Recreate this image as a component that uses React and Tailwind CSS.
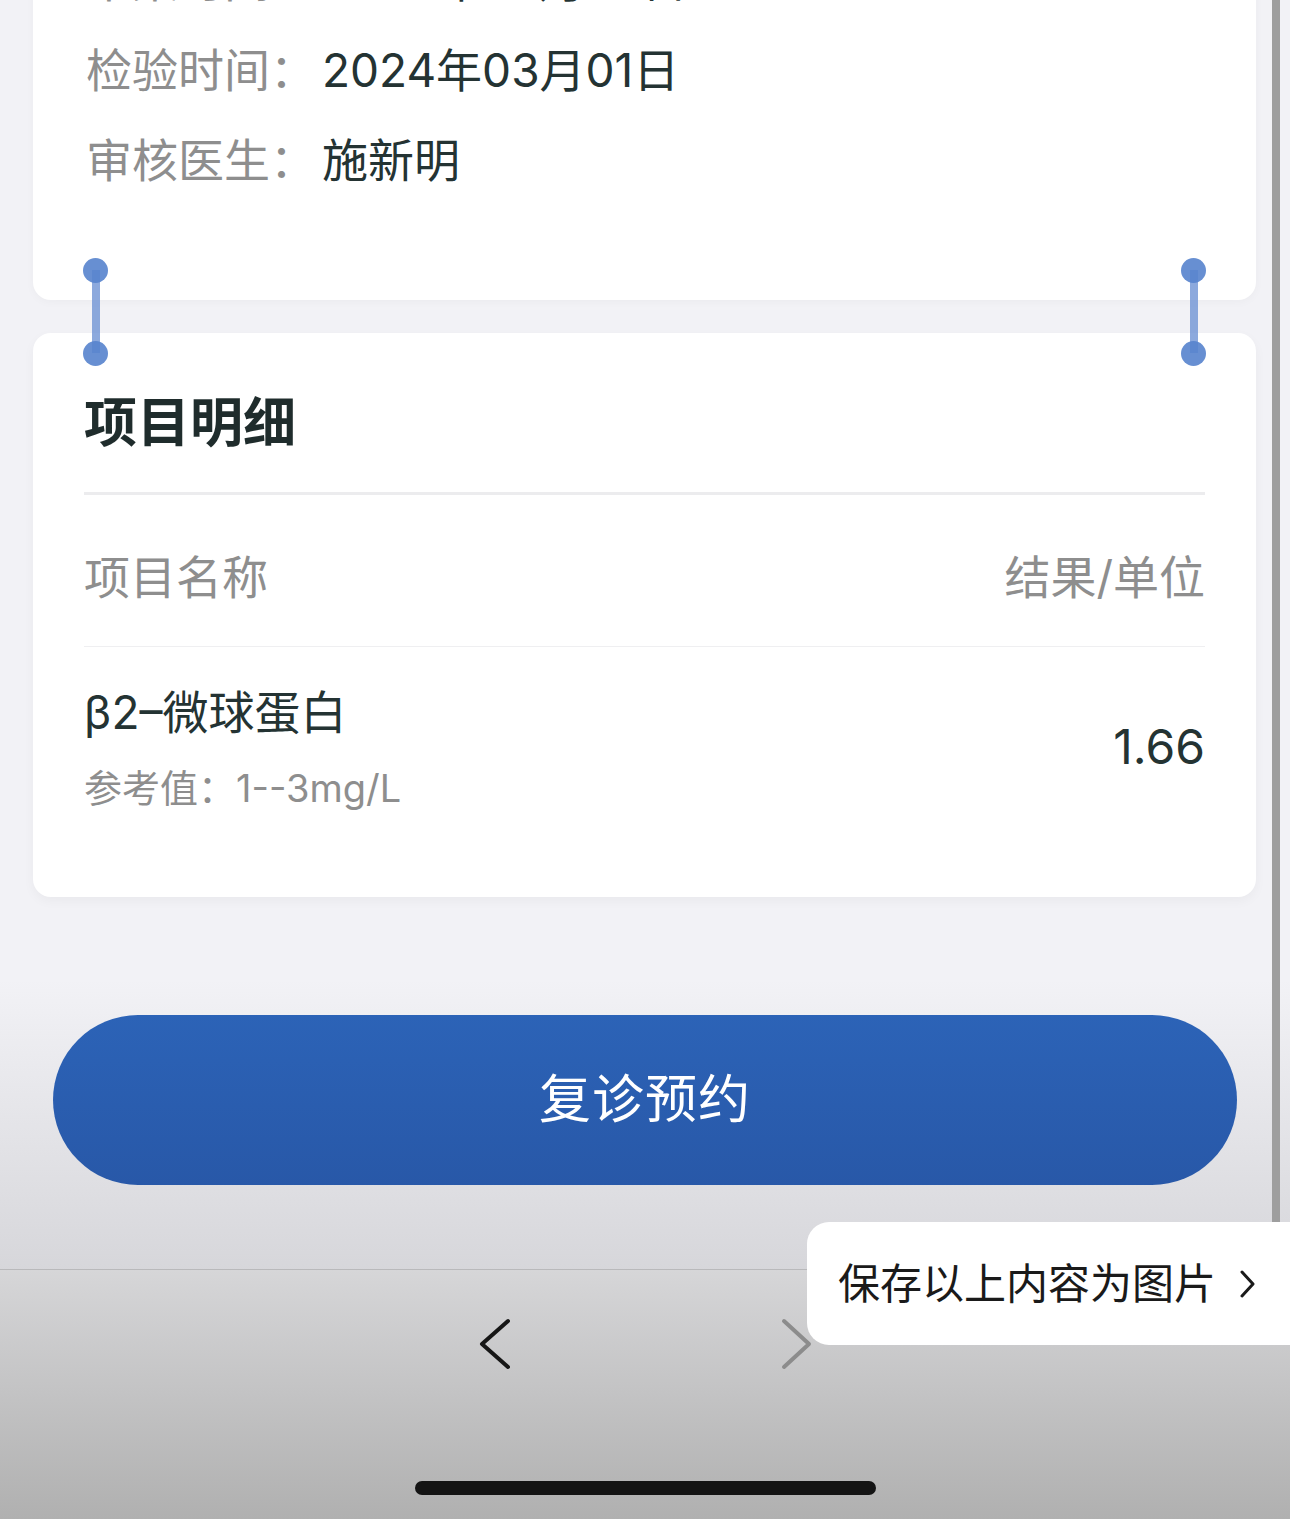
import React from "react";

const Row = ({ label, value }) => (
  <div className="flex h-[90px] items-center text-[46px] leading-none">
    <span className="text-[#8e8e8e]">{label}：</span>
    <span className="ml-[6px] text-[#243333]">{value}</span>
  </div>
);

const Handle = ({ x }) => (
  <div className="absolute top-[258px] z-20 h-[108px] w-[26px]" style={{ left: x - 13 }}>
    <div className="absolute left-[9px] top-[12px] h-[83px] w-[8px] bg-[#6f93d4]/80" />
    <div className="absolute left-0 top-0 h-[25px] w-[25px] rounded-full bg-[#5683cd]/90" />
    <div className="absolute left-0 top-[83px] h-[25px] w-[25px] rounded-full bg-[#5683cd]/90" />
  </div>
);

const App = () => {
  return (
    <div className="relative h-[1519px] w-[1290px] overflow-hidden bg-[#f2f2f6] font-['Inter','Noto_Sans_CJK_SC',sans-serif]">
      {/* 浏览器底栏渐变（按钮之下） */}
      <div className="pointer-events-none absolute left-0 top-[980px] h-[289px] w-full bg-gradient-to-b from-[#f2f2f6]/0 to-[#c4c4c8]/60" />

      <div className="relative z-10 pl-[33px] pr-[34px]">
        {/* 检验信息 */}
        <div className="-mt-[65px] rounded-[18px] bg-white pb-[95px] pl-[53px] shadow-[0_2px_10px_rgba(0,0,0,0.03)]">
          <Row label="采集时间" value="2024年02月29日 08:35:17" />
          <Row label="检验时间" value="2024年03月01日" />
          <Row label="审核医生" value="施新明" />
        </div>

        {/* 项目明细 */}
        <div className="mt-[33px] h-[564px] rounded-[18px] bg-white px-[51px] shadow-[0_4px_12px_rgba(0,0,0,0.04)]">
          <div className="pt-[60px] text-[53px] font-bold leading-[60px] text-[#1f2c2c]">
            项目明细
          </div>
          <div className="mt-[39px] h-[3px] bg-[#ececee]" />
          <div className="flex h-[152px] items-center justify-between border-b border-[#efeff1] pt-[12px] text-[46px] leading-none text-[#8e8e8e]">
            <span>项目名称</span>
            <span>结果/单位</span>
          </div>
          <div className="flex items-center justify-between pt-[40px]">
            <div className="flex flex-col">
              <span className="text-[46px] leading-[50px] text-[#243333]">β2–微球蛋白</span>
              <span className="mt-[26px] text-[38px] leading-[50px] text-[#8e8e8e]">参考值：1--3mg/L</span>
            </div>
            <span className="-mt-[6px] text-[48px] leading-none text-[#243333]">1.66</span>
          </div>
        </div>
      </div>

      <button className="relative z-10 mx-[53px] mt-[118px] flex h-[170px] w-[1184px] items-center justify-center rounded-full bg-gradient-to-b from-[#2c63b7] to-[#2858a8] text-[52px] leading-none tracking-[1px] text-white">
        复诊预约
      </button>

      {/* 选择手柄 */}
      <Handle x={96} />
      <Handle x={1194} />

      {/* 滚动条 */}
      <div className="absolute right-[10px] top-0 z-20 h-[1222px] w-[8px] bg-[#9e9e9e]" />

      {/* 浏览器底栏 */}
      <div className="absolute bottom-0 left-0 z-20 h-[250px] w-full border-t border-[#b9b9bb] bg-gradient-to-b from-[#d6d6d8] to-[#b0b0b0]">
        <svg className="absolute left-[476px] top-[47px]" width="40" height="54" viewBox="0 0 40 54">
          <polyline points="32,4 6,27 32,50" fill="none" stroke="#161616" strokeWidth="4" strokeLinecap="round" strokeLinejoin="round" />
        </svg>
        <svg className="absolute left-[778px] top-[47px]" width="40" height="54" viewBox="0 0 40 54">
          <polyline points="6,4 31,27 6,50" fill="none" stroke="#8c8c8c" strokeWidth="4" strokeLinecap="round" strokeLinejoin="round" />
        </svg>
        <div className="absolute left-[415px] top-[211px] h-[14px] w-[461px] rounded-full bg-[#141414]" />
      </div>

      {/* 保存为图片 */}
      <div className="absolute left-[807px] top-[1222px] z-30 flex h-[123px] w-[483px] items-center rounded-l-[22px] bg-white pl-[31px]">
        <span className="text-[42px] leading-none text-[#1a1a1a]">保存以上内容为图片</span>
        <svg className="ml-[22px]" width="18" height="30" viewBox="0 0 18 30">
          <polyline points="4,3 15,15 4,27" fill="none" stroke="#1a1a1a" strokeWidth="3" strokeLinecap="round" strokeLinejoin="round" />
        </svg>
      </div>
    </div>
  );
};

export default App;
